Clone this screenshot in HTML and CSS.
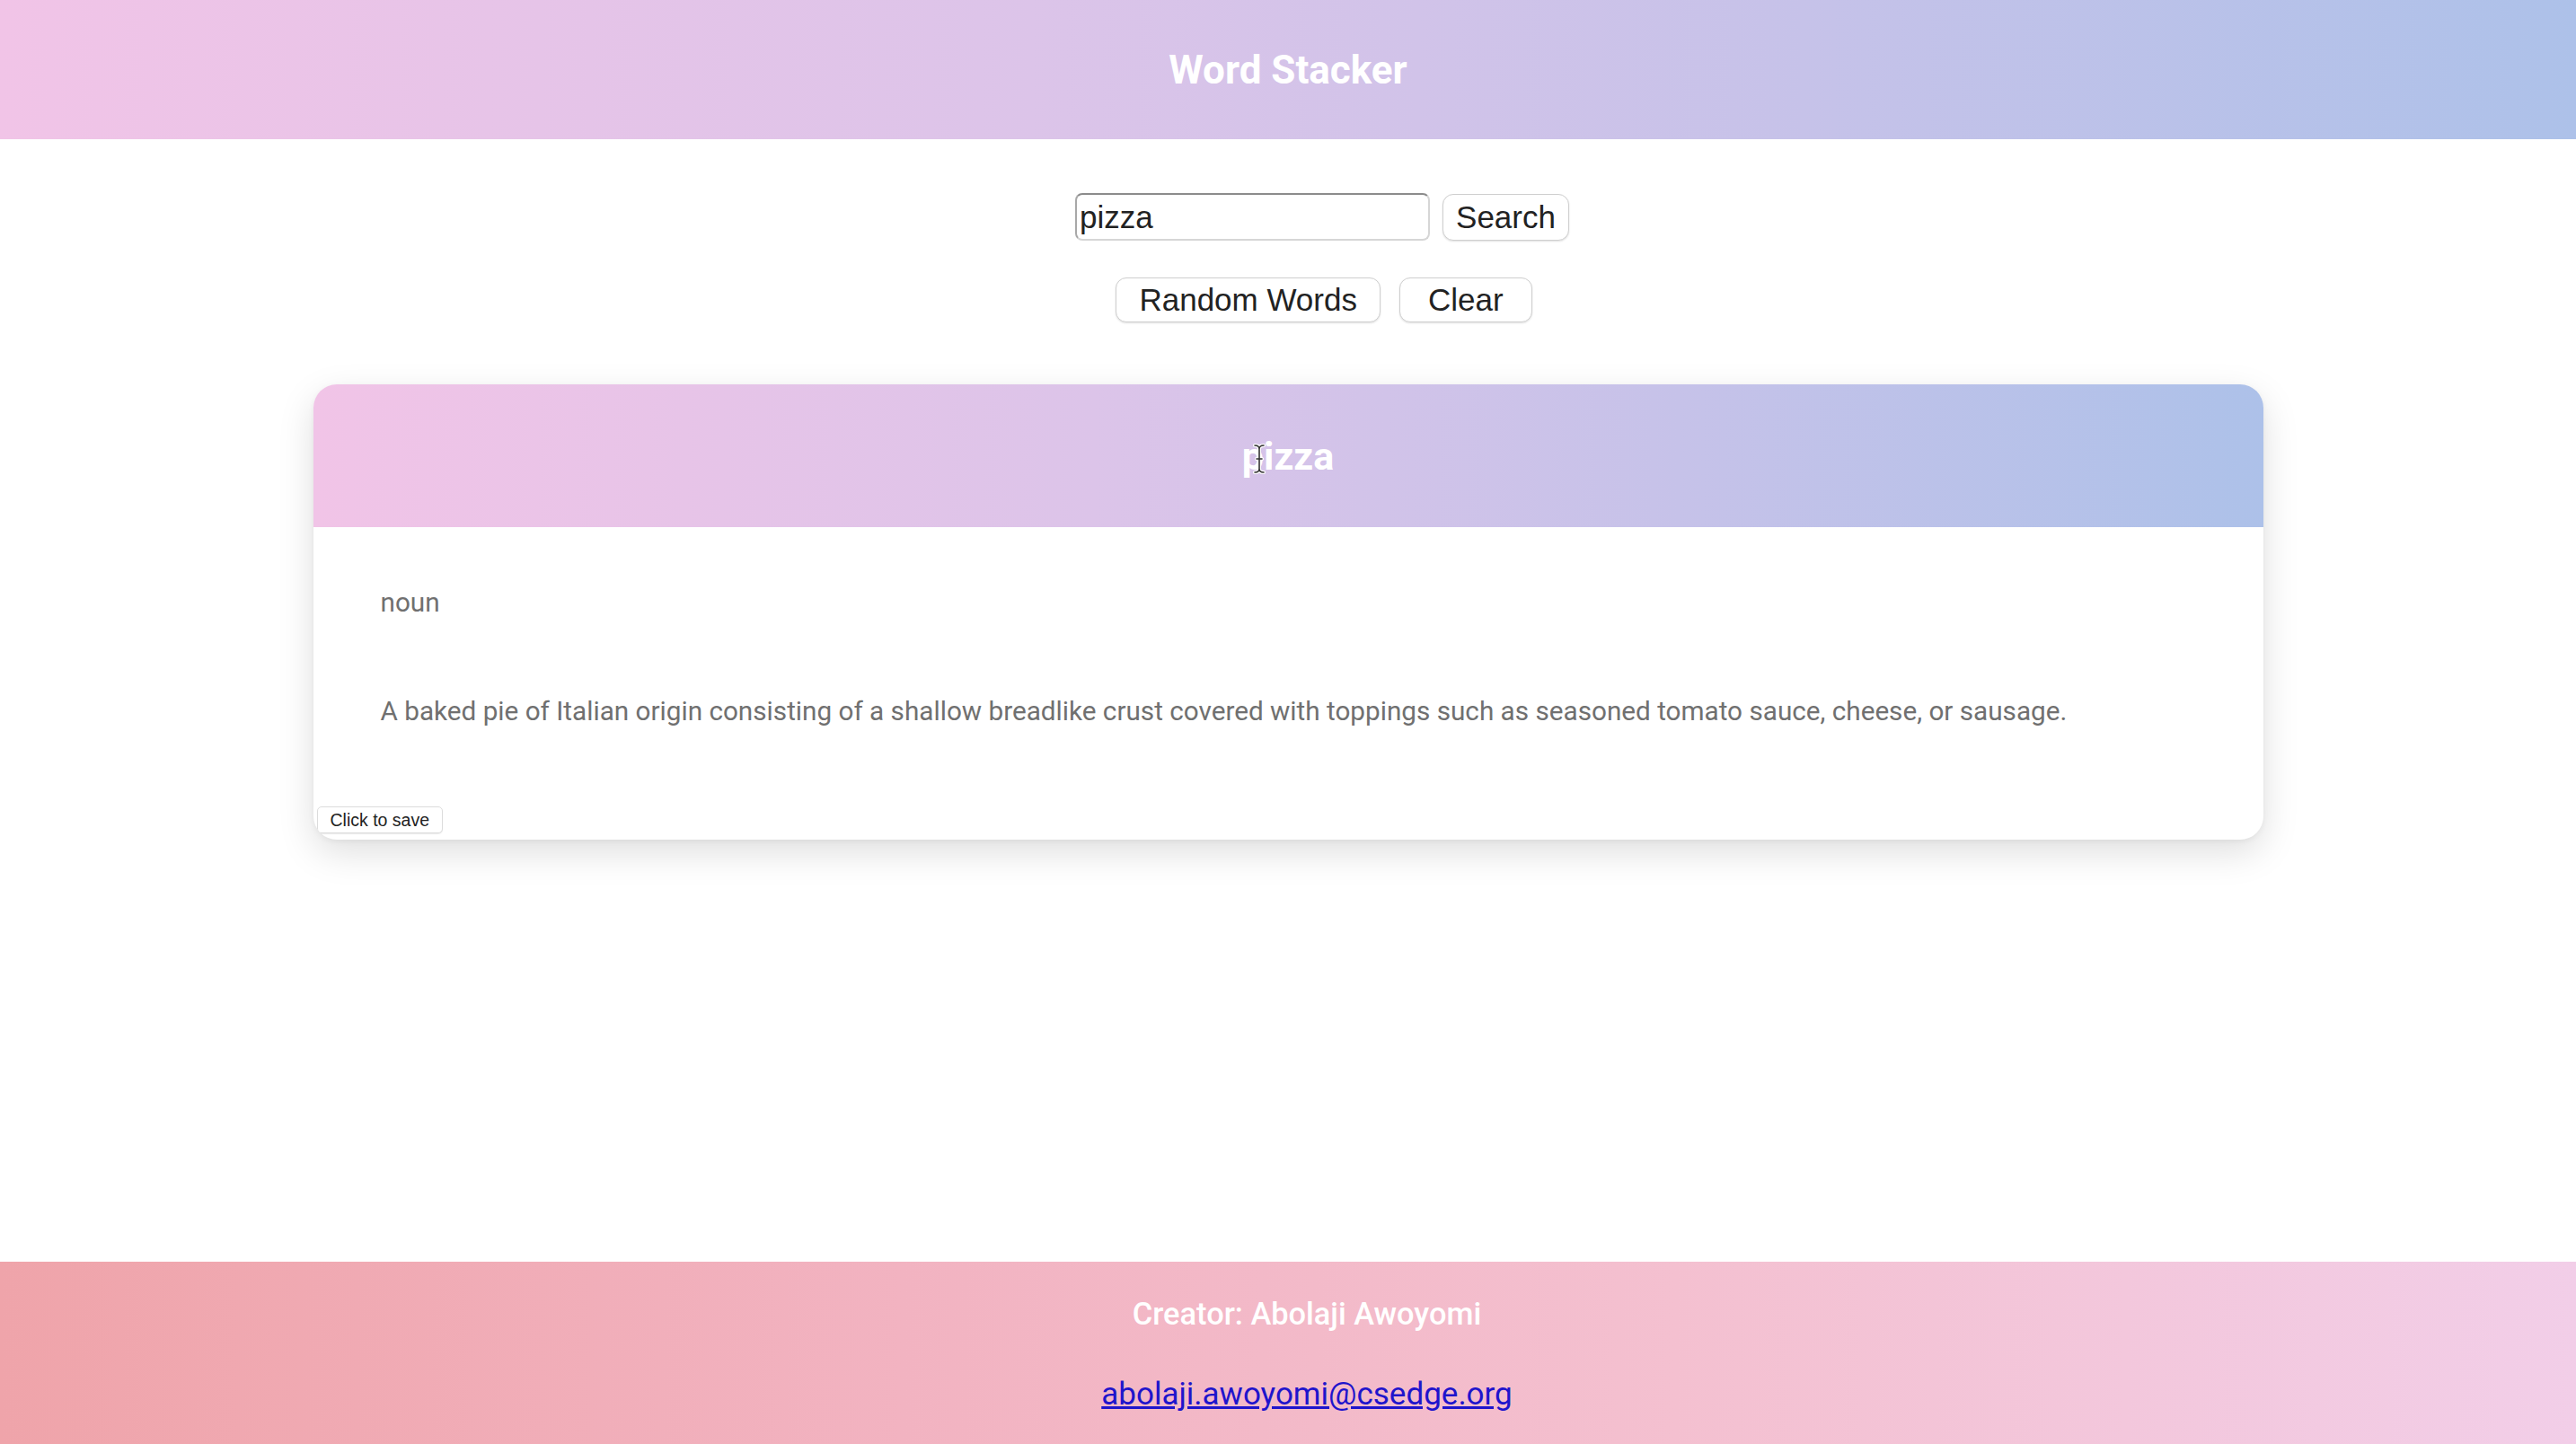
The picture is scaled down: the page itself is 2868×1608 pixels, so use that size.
FILE: index.html
```html
<!DOCTYPE html>
<html lang="en">
<head>
<meta charset="utf-8">
<title>Word Stacker</title>
<link rel="stylesheet" href="styles.css">
</head>
<body>
<header class="topbar">
  <h1 class="title">Word Stacker</h1>
</header>
<main class="main">
  <div class="controls">
    <form class="search-row">
      <input class="search-input" type="text" value="pizza">
      <button type="button" class="btn btn-search">Search</button>
    </form>
    <div class="button-row">
      <button type="button" class="btn btn-random">Random Words</button>
      <button type="button" class="btn btn-clear">Clear</button>
    </div>
  </div>
  <section class="cards">
    <article class="card">
      <div class="card-head">
        <h2 class="card-word">pizza<svg class="ibeam" width="14" height="34" viewBox="0 0 14 34"><path d="M2 2 Q7 2 7 6 Q7 2 12 2 M7 6 V28 M2 32 Q7 32 7 28 Q7 32 12 32 M4 17 H10" fill="none" stroke="#fff" stroke-width="4" stroke-linecap="round"/><path d="M2 2 Q7 2 7 6 Q7 2 12 2 M7 6 V28 M2 32 Q7 32 7 28 Q7 32 12 32 M4 17 H10" fill="none" stroke="#333" stroke-width="1.6" stroke-linecap="round"/></svg></h2>
      </div>
      <div class="card-body">
        <p class="pos">noun</p>
        <p class="def">A baked pie of Italian origin consisting of a shallow breadlike crust covered with toppings such as seasoned tomato sauce, cheese, or sausage.</p>
      </div>
      <div class="card-foot">
        <button type="button" class="save-btn">Click to save</button>
      </div>
    </article>
  </section>
</main>
<footer class="footer">
  <p class="creator">Creator: Abolaji Awoyomi</p>
  <a class="email" href="#">abolaji.awoyomi@csedge.org</a>
</footer>
</body>
</html>
```
FILE: styles.css
```css
* { box-sizing: border-box; }

html, body { margin: 0; padding: 0; }

body {
  min-height: 100vh;
  display: flex;
  flex-direction: column;
  background: #ffffff;
  font-family: Roboto, "Noto Sans", sans-serif;
}

.topbar {
  height: 155px;
  display: flex;
  align-items: center;
  justify-content: center;
  background: linear-gradient(to right, #f1c4e7 0%, #dcc4e9 40%, #c6c2e9 70%, #adc1e9 100%);
}

.title {
  margin: 0;
  color: #ffffff;
  font-size: 44px;
  font-weight: 700;
  line-height: 50px;
}

.main {
  display: flex;
  flex-direction: column;
}

.controls {
  display: flex;
  flex-direction: column;
  align-items: center;
  gap: 41px;
  padding: 60px 0 0 76px;
}

.search-row {
  margin: 0;
  display: flex;
  align-items: center;
  gap: 14px;
}

.search-input {
  width: 395px;
  height: 53px;
  padding: 0 3px;
  font-family: "Liberation Sans", Arial, sans-serif;
  font-size: 35px;
  color: #222;
  background: #fff;
  border: 2px solid #d6d6d6;
  border-top-color: #8c8c8c;
  border-left-color: #a8a8a8;
  border-radius: 8px;
  outline: none;
}

.button-row {
  display: flex;
  gap: 21px;
  padding-left: 4px;
}

.btn {
  height: 52px;
  font-family: "Liberation Sans", Arial, sans-serif;
  font-size: 35px;
  color: #222;
  background: #fff;
  border: 1.5px solid #cfcfcf;
  border-radius: 12px;
  box-shadow: 0 1px 2px rgba(0, 0, 0, 0.12);
  cursor: pointer;
}

.btn-search { padding: 0 14px; }
.btn-random { height: 50px; padding: 0 25px; }
.btn-clear { height: 50px; padding: 0 31px; }

.cards {
  display: flex;
  justify-content: center;
  padding-top: 69px;
}

.card {
  width: 2171px;
  background: #fff;
  border-radius: 26px;
  overflow: hidden;
  box-shadow: 0 14px 40px rgba(0, 0, 0, 0.13), 0 2px 6px rgba(0, 0, 0, 0.05);
  display: flex;
  flex-direction: column;
}

.card-head {
  height: 159px;
  display: flex;
  align-items: center;
  justify-content: center;
  background: linear-gradient(to right, #f1c4e7 0%, #dcc4e9 40%, #c6c2e9 70%, #adc1e9 100%);
}

.card-word {
  position: relative;
  margin: 0;
  color: #fff;
  font-size: 43px;
  font-weight: 700;
  line-height: 52px;
}

.ibeam {
  position: absolute;
  left: 12px;
  top: 12px;
}

.card-body {
  padding: 0 75px;
}

.pos {
  margin: 67px 0 0;
  font-size: 29.7px;
  line-height: 34px;
  color: #707070;
}

.def {
  margin: 87px 0 0;
  font-size: 29.7px;
  line-height: 34px;
  color: #707070;
}

.card-foot {
  display: flex;
  padding: 89px 0 7px 4px;
}

.save-btn {
  height: 30px;
  padding: 0 14px;
  font-family: "Liberation Sans", Arial, sans-serif;
  font-size: 19.5px;
  color: #222;
  background: #fff;
  border: 1px solid #dcdcdc;
  border-radius: 5px;
  box-shadow: 0 1px 1px rgba(0, 0, 0, 0.08);
}

.footer {
  margin-top: auto;
  height: 203px;
  display: flex;
  flex-direction: column;
  align-items: center;
  padding: 39px 0 0 42px;
  background: linear-gradient(to right, #efa4aa 0%, #f2b3c1 35%, #f4c0d0 65%, #f2cee8 100%);
}

.creator {
  margin: 0;
  color: #fff;
  font-size: 34.4px;
  font-weight: 500;
  line-height: 39px;
}

.email {
  margin-top: 50px;
  font-size: 35px;
  line-height: 40px;
  color: #1f14cc;
  text-decoration: underline;
}
```
